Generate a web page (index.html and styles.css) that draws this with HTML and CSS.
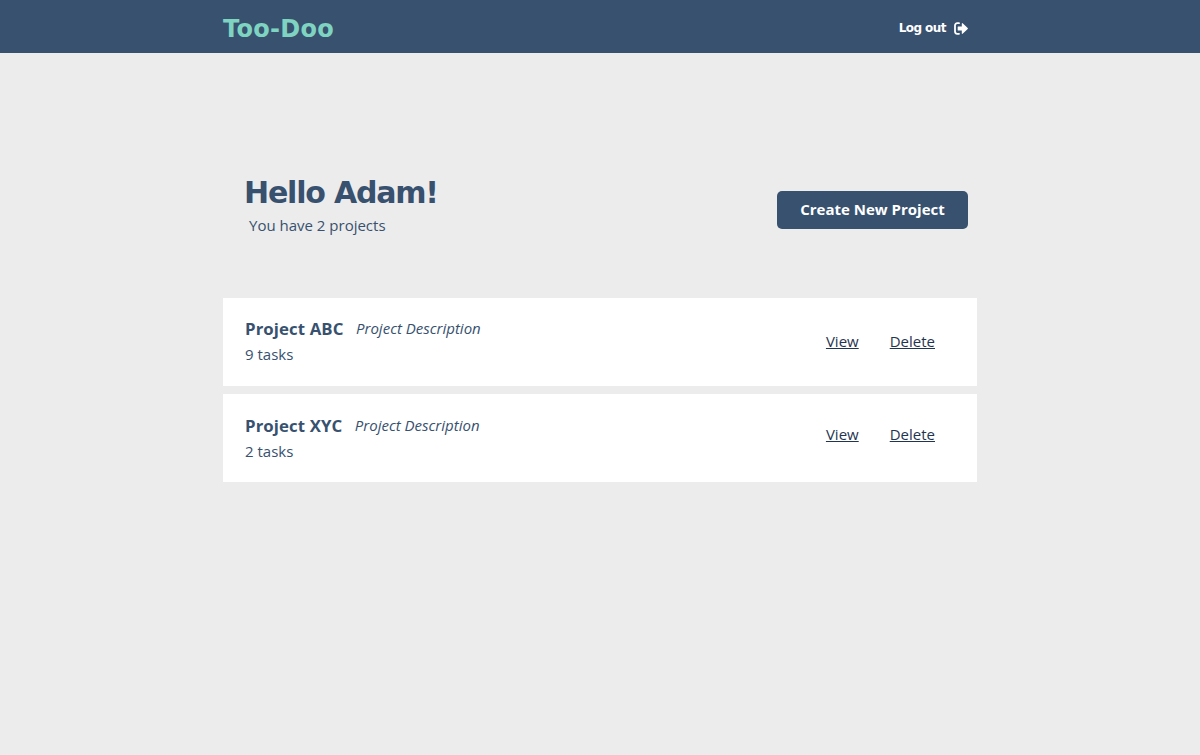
FILE: index.html
```
<!DOCTYPE html>
<html lang="en">
<head>
<meta charset="utf-8">
<title>Too-Doo</title>
<link rel="stylesheet" href="styles.css">
</head>
<body>
<header class="navbar">
  <div class="navbar-inner">
    <a class="brand" href="#">Too-Doo</a>
    <a class="logout" href="#">Log out
      <svg class="logout-icon" viewBox="0 0 14 13" width="14" height="13" aria-hidden="true">
        <path d="M5 1.2H3.2A2.2 2.2 0 0 0 1 3.4v6.2a2.2 2.2 0 0 0 2.2 2.2H5" fill="none" stroke="#fff" stroke-width="1.8" stroke-linecap="round"/>
        <path d="M4.2 4.6h3.6V1.6a.5.5 0 0 1 .85-.35L13.7 6.1a.55.55 0 0 1 0 .8l-5.05 4.85a.5.5 0 0 1-.85-.35v-3H4.2a.5.5 0 0 1-.5-.5V5.1a.5.5 0 0 1 .5-.5z" fill="#fff"/>
      </svg>
    </a>
  </div>
</header>
<main class="container">
  <section class="intro">
    <div class="intro-text">
      <h1 class="hello">Hello Adam!</h1>
      <p class="count">You have 2 projects</p>
    </div>
    <a class="create" href="#">Create New Project</a>
  </section>
  <section class="projects">
    <article class="project project-first">
      <div class="project-info">
        <div class="project-head"><h2 class="project-name">Project ABC</h2><em class="project-desc">Project Description</em></div>
        <p class="project-tasks">9 tasks</p>
      </div>
      <div class="project-actions"><a href="#">View</a><a href="#">Delete</a></div>
    </article>
    <article class="project project-second">
      <div class="project-info">
        <div class="project-head"><h2 class="project-name">Project XYC</h2><em class="project-desc">Project Description</em></div>
        <p class="project-tasks">2 tasks</p>
      </div>
      <div class="project-actions"><a href="#">View</a><a href="#">Delete</a></div>
    </article>
  </section>
</main>
</body>
</html>
```
FILE: styles.css
```
* { box-sizing: border-box; }
html, body { margin: 0; padding: 0; }
body {
  background: #ececec;
  color: #37516f;
  font-family: "Open Sans", "Liberation Sans", sans-serif;
  min-height: 755px;
}
a { color: inherit; }
.navbar { background: #37516f; height: 53px; }
.navbar-inner {
  width: 754px;
  height: 53px;
  margin: 0 auto;
  padding: 3px 9px 0 0;
  display: flex;
  align-items: center;
  justify-content: space-between;
}
.brand {
  color: #7fd4c1;
  font-family: "DejaVu Sans", "Liberation Sans", sans-serif;
  font-weight: 700;
  font-size: 24px;
  letter-spacing: 0.3px;
  margin-top: 2px;
  text-decoration: none;
}
.logout {
  color: #fff;
  font-family: "DejaVu Sans", "Liberation Sans", sans-serif;
  font-weight: 700;
  font-size: 12px;
  letter-spacing: -0.55px;
  text-decoration: none;
  display: flex;
  align-items: center;
  gap: 8px;
}
.container { width: 754px; margin: 0 auto; }
.intro {
  display: flex;
  align-items: flex-start;
  justify-content: space-between;
  padding: 120px 9px 0 22px;
  height: 245px;
}
.hello {
  margin: 0 0 0 -1px;
  font-family: "DejaVu Sans", "Liberation Sans", sans-serif;
  font-weight: 700;
  font-size: 30px;
  letter-spacing: -1.2px;
  line-height: 40px;
}
.count { margin: 2px 0 0 4px; font-size: 15px; line-height: 20px; }
.create {
  width: 191px;
  height: 38px;
  margin-top: 18px;
  padding-bottom: 2px;
  background: #37516f;
  color: #fff;
  border-radius: 5px;
  font-weight: 700;
  font-size: 15px;
  display: flex;
  align-items: center;
  justify-content: center;
  text-decoration: none;
}
.projects { display: flex; flex-direction: column; gap: 8px; }
.project {
  background: #fff;
  height: 88px;
  padding: 20px 42px 0 22px;
  display: flex;
  justify-content: space-between;
}
.project-second { padding-top: 21px; }
.project-head { display: flex; align-items: flex-start; gap: 12.5px; }
.project-name { margin: 0; font-size: 16.8px; letter-spacing: 0.1px; font-weight: 700; line-height: 22px; }
.project-desc { font-size: 15px; line-height: 20px; }
.project-tasks { margin: 3px 0 0; font-size: 15px; line-height: 22px; }
.project-actions { display: flex; gap: 31px; font-size: 15px; color: #1f3550; line-height: 22px; }
.project-first .project-actions { padding-top: 12px; }
.project-second .project-actions { padding-top: 8px; }
```
